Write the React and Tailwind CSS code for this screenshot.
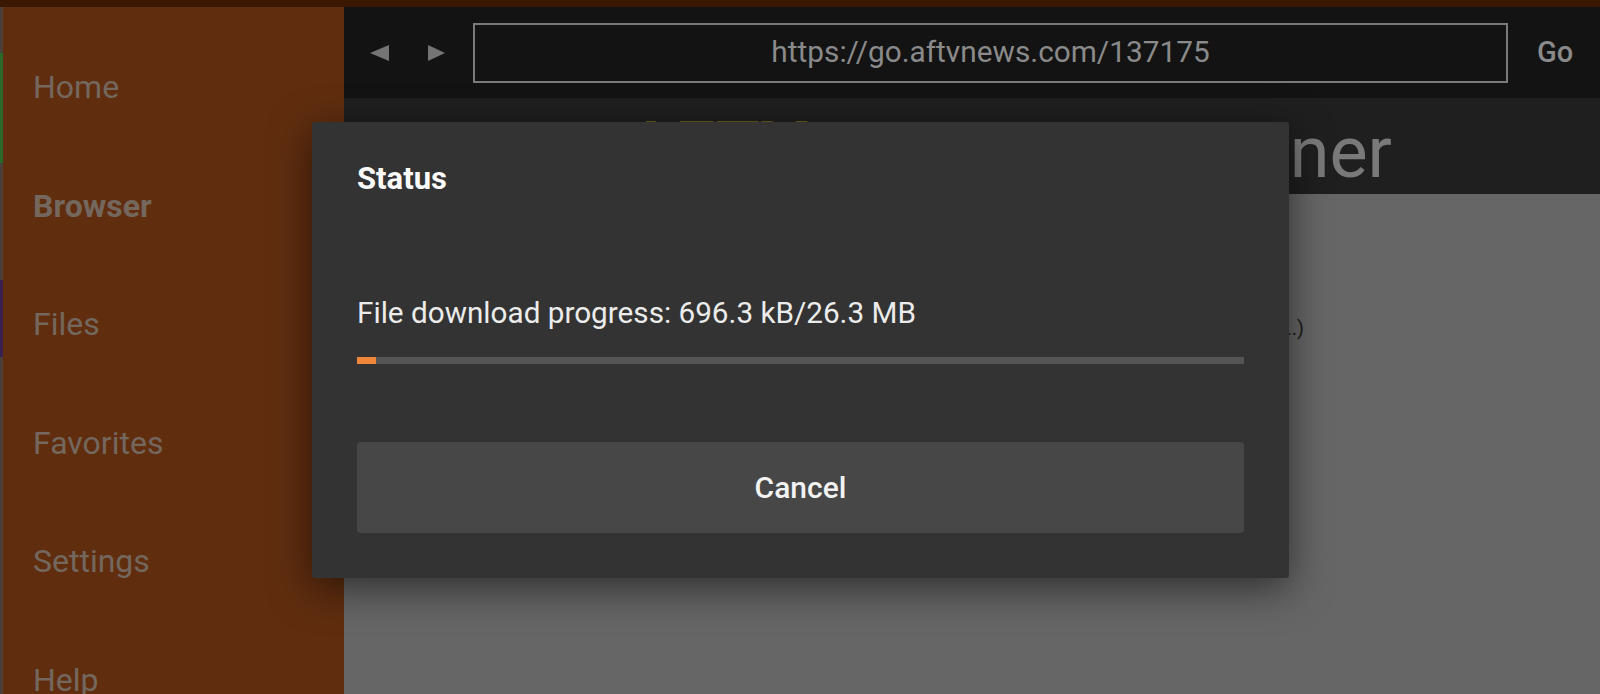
import React from 'react';

const navItems = [
  { label: 'Home' },
  { label: 'Browser', active: true },
  { label: 'Files' },
  { label: 'Favorites' },
  { label: 'Settings' },
  { label: 'Help' },
];

const download = { done: 696.3, total: 26300 };

function Sidebar() {
  return (
    <aside className="flex w-[344px] shrink-0">
      {/* thin edge of the launcher behind the app */}
      <div className="flex w-[3px] flex-col bg-[#4a4038]">
        <div className="h-[46px]" />
        <div className="h-[110px] bg-[#2a6a2a]" />
        <div className="h-[117px]" />
        <div className="h-[77px] bg-[#3a2050]" />
      </div>
      <nav className="flex-1 bg-[#602e0f] pl-[30px] pt-[64px]">
        {navItems.map((item) => (
          <div
            key={item.label}
            className={`h-[118.5px] text-[32px] leading-[32px] text-[#74675e] ${
              item.active ? 'font-bold' : 'font-normal'
            }`}
          >
            {item.label}
          </div>
        ))}
      </nav>
    </aside>
  );
}

function Toolbar() {
  return (
    <div className="flex h-[91px] items-center bg-[#131313]">
      <div className="flex w-[129px] items-center pl-[26px] gap-[39px]">
        <svg width="19" height="16" viewBox="0 0 19 16">
          <polygon points="0,8 19,0 19,16" fill="#747474" />
        </svg>
        <svg width="17" height="16" viewBox="0 0 17 16">
          <polygon points="17,8 0,0 0,16" fill="#747474" />
        </svg>
      </div>
      <div className="flex h-[60px] w-[1035px] items-center justify-center border-2 border-[#7a7a7a] bg-[#131313]">
        <span className="text-[29.8px] text-[#8a8a8a]">https://go.aftvnews.com/137175</span>
      </div>
      <div className="pl-[29px] text-[29px] font-medium text-[#8a8a8a]">Go</div>
    </div>
  );
}

function StatusDialog() {
  const pct = (download.done / download.total) * 80;
  return (
    <div className="absolute left-[312px] top-[122px] h-[456px] w-[977px] rounded-[3px] bg-[#333333] px-[45px] pt-[42px] shadow-[0_10px_40px_rgba(0,0,0,0.55)]">
      <h2 className="text-[31px] font-bold leading-[30px] text-[#fafafa]">Status</h2>
      <p className="mt-[104px] text-[29.7px] leading-[30px] text-[#ececec]">
        File download progress: 696.3 kB/26.3 MB
      </p>
      <div className="mt-[29px] h-[7px] w-full bg-[#555555]">
        <div className="h-full bg-[#f0863a]" style={{ width: `${pct}%` }} />
      </div>
      <button className="mt-[78px] flex h-[91px] w-full items-center justify-center rounded-[4px] bg-[#474747] text-[30px] font-medium text-[#f2f2f2]">
        Cancel
      </button>
    </div>
  );
}

export default function App() {
  return (
    <div className="relative h-[694px] w-[1600px] overflow-hidden bg-[#666666] font-['Roboto',sans-serif]">
      <div className="h-[7px] bg-[#3a1802]" />
      <div className="flex h-[687px]">
        <Sidebar />
        <main className="flex flex-1 flex-col">
          <Toolbar />
          <header className="flex h-[96px] items-start justify-between overflow-hidden bg-[#1f1f1f] pl-[283px] pr-[208px]">
            <span className="mt-[15px] text-[72px] font-bold leading-[72px] text-[#6a5c1c]">AFTVnews</span>
            <span className="mt-[19px] text-[72px] leading-[72px] text-[#797979]">URL Opener</span>
          </header>
          <section className="flex flex-1 justify-end bg-[#666666] pr-[296px]">
            <p className="mt-[124px] text-[20px] leading-[20px] text-[#1a1a1a]">
              Please wait while the link is being opened (...)
            </p>
          </section>
        </main>
      </div>
      <StatusDialog />
    </div>
  );
}
